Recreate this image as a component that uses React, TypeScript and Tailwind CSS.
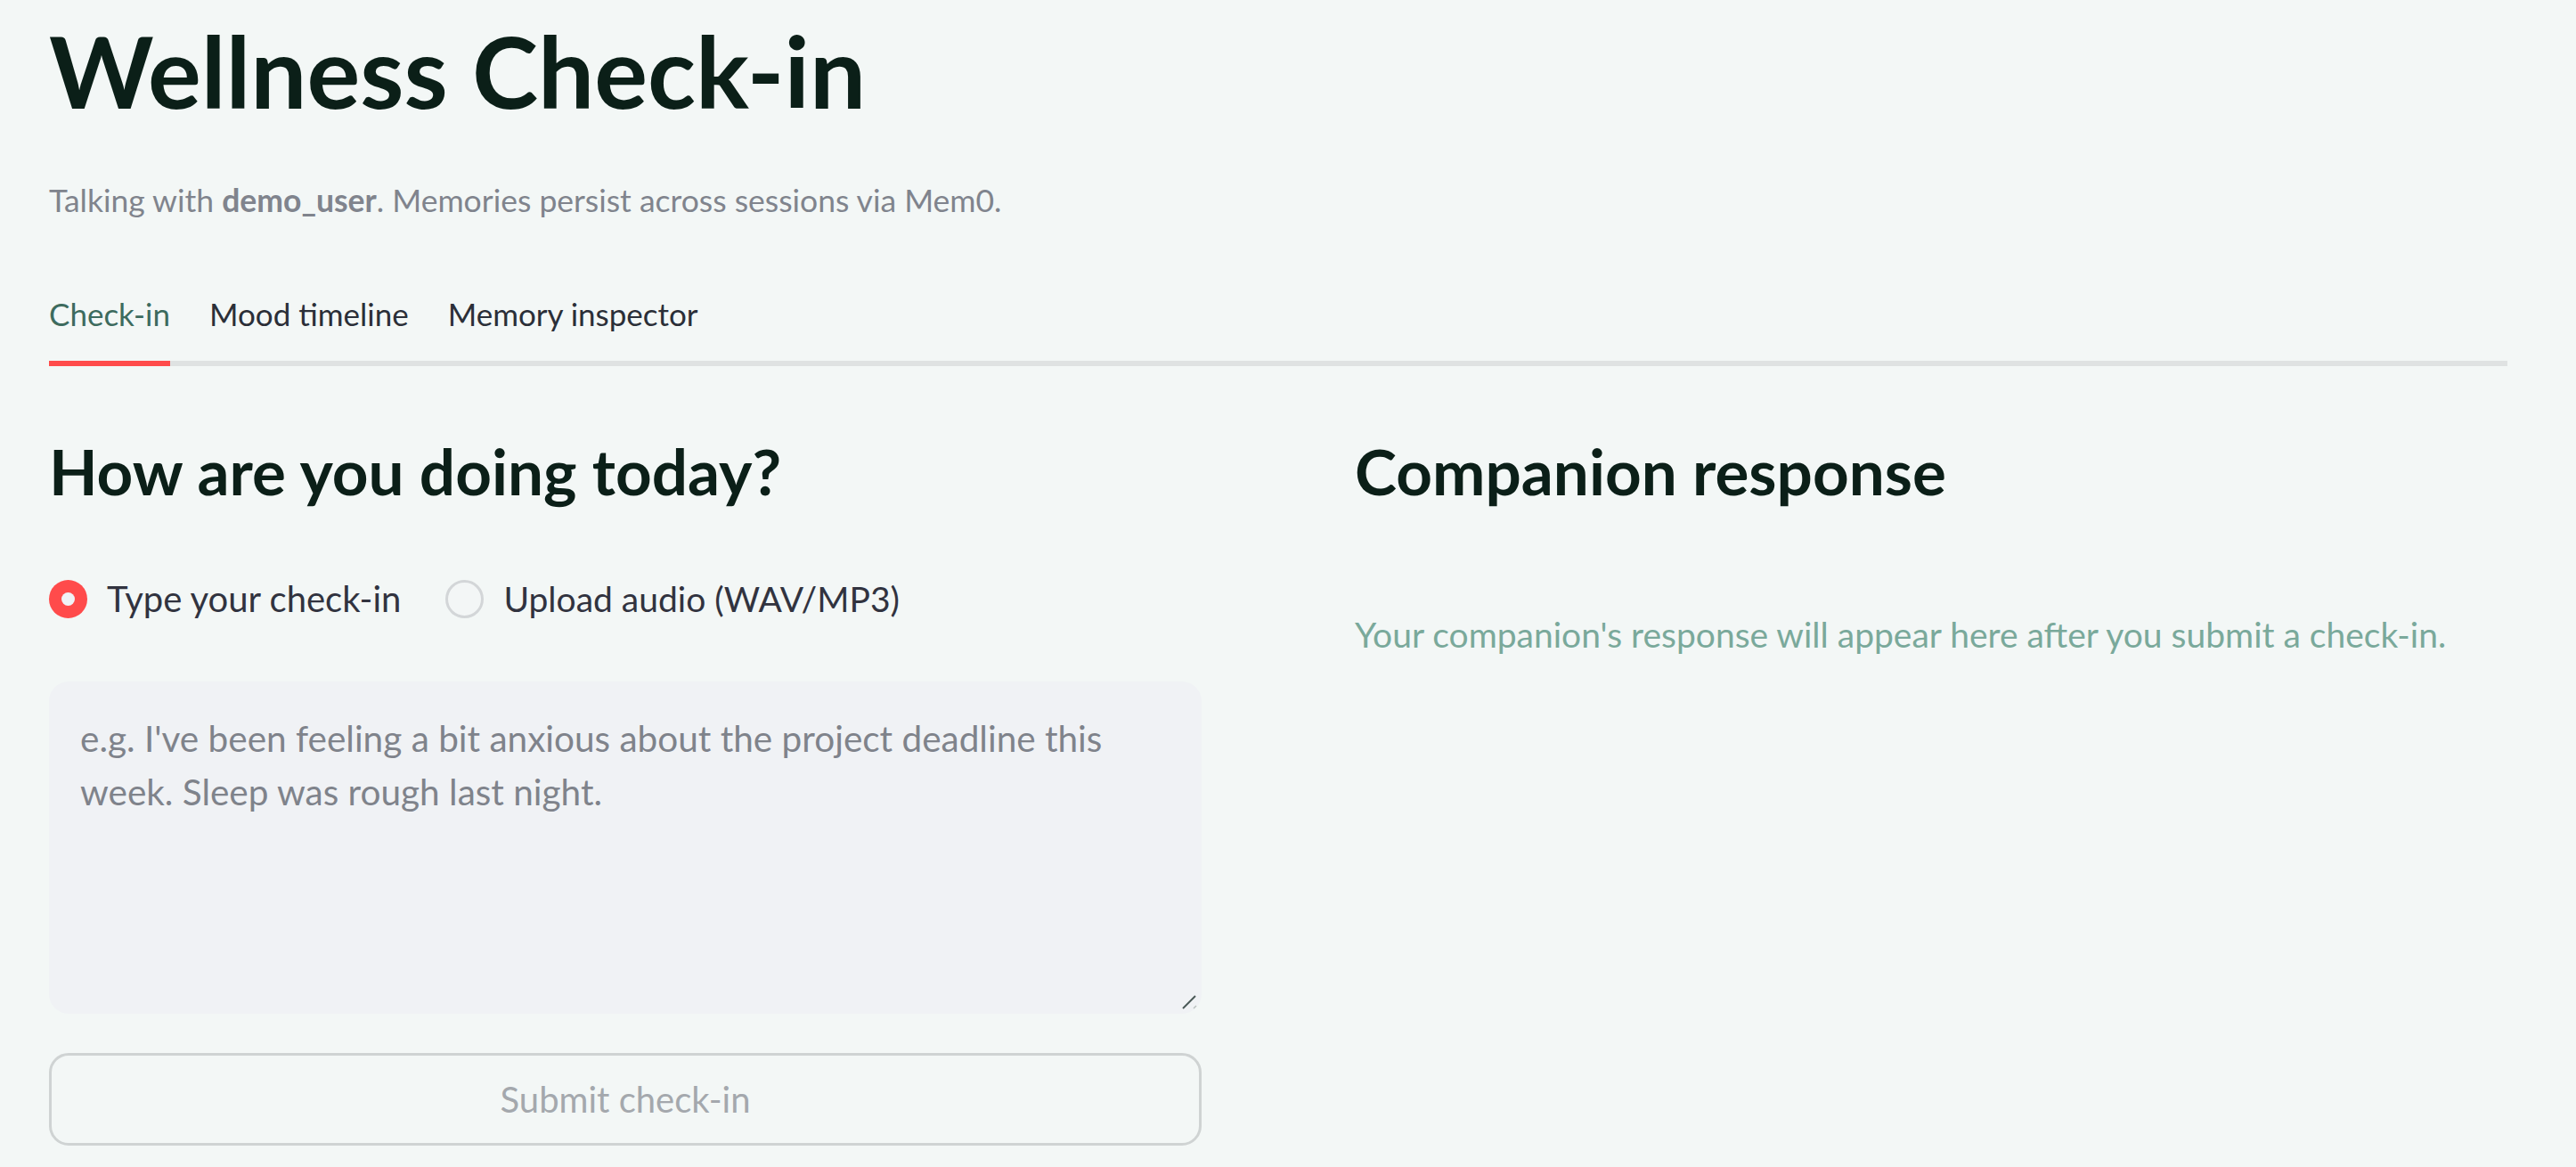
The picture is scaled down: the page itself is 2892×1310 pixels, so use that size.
import React from "react";

const tabs = ["Check-in", "Mood timeline", "Memory inspector"];

const RadioDot = ({ checked }: { checked: boolean }) =>
  checked ? (
    <span className="flex h-[43px] w-[43px] shrink-0 items-center justify-center rounded-full bg-[#ff4b4b]">
      <span className="h-[15px] w-[15px] rounded-full bg-[#f0f2f6]" />
    </span>
  ) : (
    <span className="h-[43px] w-[43px] shrink-0 rounded-full border-[3px] border-[#d3d6d8] bg-[#f3f6f6]" />
  );

export default function App() {
  return (
    <div className="min-h-screen bg-[#f3f7f6] font-['Lato',sans-serif] text-[#31333f]">
      <div className="pl-[55px] pr-[77px] pt-[12px]">
        <h1 className="text-[112px] font-bold leading-[1.2] text-[#0b1f18]">
          Wellness Check-in
        </h1>

        <p className="mt-[58px] text-[35.5px] leading-[1.2] text-[#80848d]">
          Talking with <span className="font-bold">demo_user</span>. Memories
          persist across sessions via Mem0.
        </p>

        <div className="mt-[84px]">
          <div className="flex gap-[44px]">
            {tabs.map((tab, i) => (
              <div key={tab} className="flex flex-col">
                <span
                  className={
                    i === 0
                      ? "text-[35px] leading-[1.2] text-[#3d6b5e]"
                      : "text-[35px] leading-[1.2] text-[#2b2f38]"
                  }
                >
                  {tab}
                </span>
                <span
                  className={
                    i === 0
                      ? "mt-[32px] h-[6px] bg-[#ff4b4b]"
                      : "mt-[32px] h-[6px] bg-transparent"
                  }
                />
              </div>
            ))}
          </div>
          <div className="-mt-[6px] h-[6px] bg-[#dfe2e2]" />
        </div>

        <div className="grid grid-cols-2 gap-[172px]">
          {/* left column */}
          <div className="flex flex-col">
            <h3 className="mt-[75px] text-[71px] font-bold leading-[1.2] text-[#0b1f18]">
              How are you doing today?
            </h3>

            <div className="mt-[77px] flex items-center">
              <div className="flex items-center gap-[22px]">
                <RadioDot checked />
                <span className="text-[40px] leading-[1.2]">Type your check-in</span>
              </div>
              <div className="ml-[50px] flex items-center gap-[22px]">
                <RadioDot checked={false} />
                <span className="text-[39px] leading-[1.2]">Upload audio (WAV/MP3)</span>
              </div>
            </div>

            <div className="relative mt-[69px] h-[373px] rounded-[22px] bg-[#f0f2f5] px-[35px] pt-[34px]">
              <p className="text-[40.5px] leading-[60px] text-[#7f838b]">
                e.g. I've been feeling a bit anxious about the project deadline this
                <br />
                week. Sleep was rough last night.
              </p>
              <svg
                className="absolute bottom-[3px] right-[3px]"
                width="20"
                height="20"
                viewBox="0 0 20 20"
              >
                <line x1="2" y1="17" x2="16" y2="3" stroke="#4a5957" strokeWidth="2" />
                <line x1="14" y1="17" x2="17" y2="14" stroke="#b8bfbe" strokeWidth="1.5" />
              </svg>
            </div>

            <button className="mt-[44px] h-[104px] rounded-[22px] border-[3px] border-[#cfd3d3] text-[40px] leading-[1.2] text-[#a4a8ad]">
              Submit check-in
            </button>
          </div>

          {/* right column */}
          <div className="flex flex-col">
            <h3 className="mt-[75px] text-[71px] font-bold leading-[1.2] text-[#0b1f18]">
              Companion response
            </h3>
            <p className="mt-[118px] text-[39px] leading-[1.2] text-[#7aa99b]">
              Your companion's response will appear here after you submit a check-in.
            </p>
          </div>
        </div>
      </div>
    </div>
  );
}
